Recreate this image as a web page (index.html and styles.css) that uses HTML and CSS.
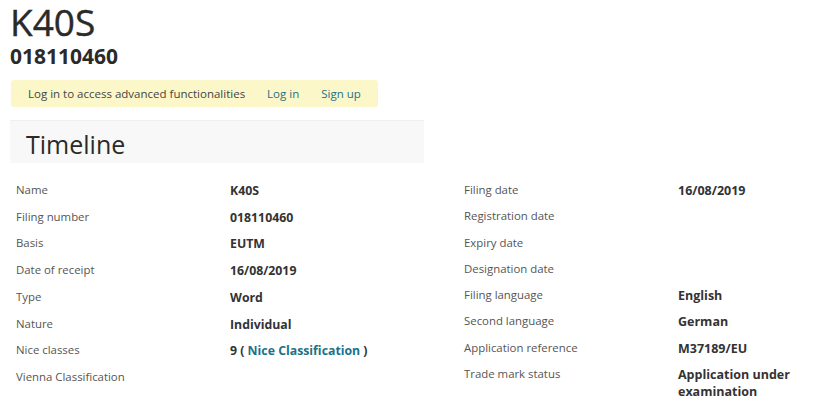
FILE: index.html
```html
<!DOCTYPE html>
<html lang="en">
<head>
<meta charset="utf-8">
<title>K40S</title>
<link rel="stylesheet" href="styles.css">
</head>
<body>
<div class="page">
  <h1 class="title">K40S</h1>
  <h2 class="number">018110460</h2>
  <div class="notice">
    <span>Log in to access advanced functionalities</span>
    <a href="#" class="link">Log in</a>
    <a href="#" class="link">Sign up</a>
  </div>
  <div class="timeline"><h3>Timeline</h3></div>
  <div class="details">
    <div class="col col-left">
      <div class="row"><span class="label">Name</span><span class="value">K40S</span></div>
      <div class="row"><span class="label">Filing number</span><span class="value">018110460</span></div>
      <div class="row"><span class="label">Basis</span><span class="value">EUTM</span></div>
      <div class="row"><span class="label">Date of receipt</span><span class="value">16/08/2019</span></div>
      <div class="row"><span class="label">Type</span><span class="value">Word</span></div>
      <div class="row"><span class="label">Nature</span><span class="value">Individual</span></div>
      <div class="row"><span class="label">Nice classes</span><span class="value">9 ( <a href="#" class="link">Nice Classification</a> )</span></div>
      <div class="row"><span class="label">Vienna Classification</span><span class="value"></span></div>
    </div>
    <div class="col col-right">
      <div class="row"><span class="label">Filing date</span><span class="value">16/08/2019</span></div>
      <div class="row"><span class="label">Registration date</span><span class="value"></span></div>
      <div class="row"><span class="label">Expiry date</span><span class="value"></span></div>
      <div class="row"><span class="label">Designation date</span><span class="value"></span></div>
      <div class="row"><span class="label">Filing language</span><span class="value">English</span></div>
      <div class="row"><span class="label">Second language</span><span class="value">German</span></div>
      <div class="row"><span class="label">Application reference</span><span class="value">M37189/EU</span></div>
      <div class="row"><span class="label">Trade mark status</span><span class="value">Application under examination</span></div>
    </div>
  </div>
</div>
</body>
</html>
```

FILE: styles.css
```css
html, body {
  margin: 0;
  padding: 0;
  background: #fff;
}
body {
  font-family: "Open Sans", "Liberation Sans", sans-serif;
  color: #333;
}
.page {
  padding: 0 0 0 10px;
}
.title {
  margin: 0;
  font-size: 37px;
  font-weight: 400;
  line-height: 44px;
  color: #2a2a2a;
  -webkit-text-stroke: 0.4px #2a2a2a;
}
.number {
  margin: 0;
  font-size: 21px;
  font-weight: 700;
  line-height: 25px;
  color: #2a2a2a;
}
.notice {
  display: inline-flex;
  align-items: center;
  gap: 22px;
  margin: 11px 0 0 1px;
  padding: 0 17px;
  height: 27px;
  background: #fcf7c8;
  border-radius: 3px;
  font-size: 11.5px;
  color: #444;
}
.link {
  color: #1d7189;
  text-decoration: none;
}
.timeline {
  width: 414px;
  height: 43px;
  margin-top: 13px;
  background: #f8f8f8;
  border-top: 1px solid #f0f0f0;
  box-sizing: border-box;
}
.timeline h3 {
  margin: 0;
  padding-left: 16px;
  font-size: 25px;
  font-weight: 400;
  line-height: 46px;
  color: #2a2a2a;
}
.details {
  display: flex;
  padding: 14px 0 0 6px;
}
.col-left {
  width: 448px;
  flex: none;
}
.col-right {
  flex: 1;
  padding-right: 8px;
}
.row {
  display: grid;
  grid-template-columns: 214px 1fr;
  padding: 4px 0;
  line-height: 18.7px;
}
.col-right .row {
  line-height: 18.3px;
}
.label {
  font-size: 11.4px;
  color: #555;
}
.value {
  font-size: 12.3px;
  font-weight: 700;
  color: #333;
  line-height: 17px;
  padding-top: 1px;
}
.col-right .value {
  font-size: 12.5px;
}
```
